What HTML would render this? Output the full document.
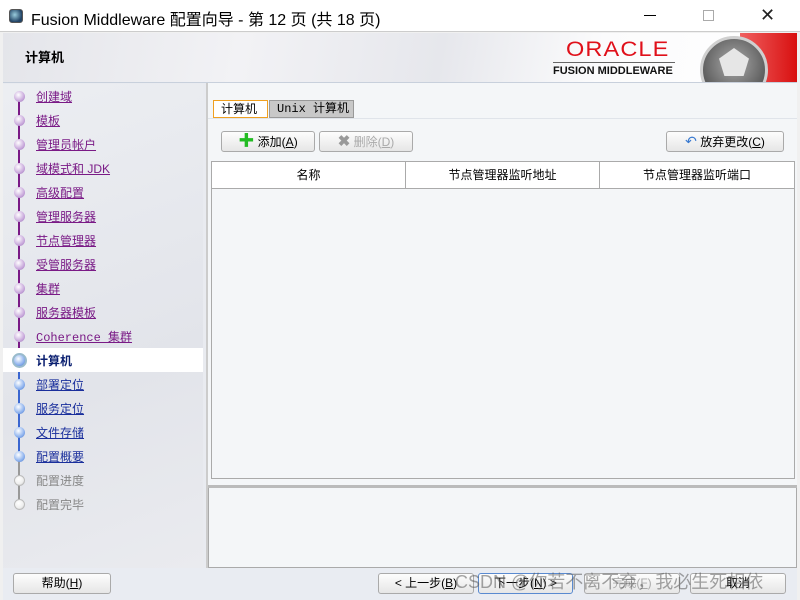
<!DOCTYPE html>
<html><head><meta charset="utf-8"><style>
*{box-sizing:border-box;margin:0;padding:0}
body{width:800px;height:600px;overflow:hidden;background:#f0f0f0;font-family:"Liberation Sans","Noto Sans CJK SC",sans-serif;position:relative;font-size:12px}
.abs{position:absolute}
.title{left:0;top:0;width:800px;height:32px;background:#fff;border-bottom:1px solid #ccc}
.win{left:3px;top:33px;width:794px;height:567px;background:#e9ebf0}
.hdr{left:3px;top:33px;width:794px;height:50px;background:linear-gradient(100deg,#e4e5ea 0%,#f2f2f5 30%,#e6e7ec 55%,#fbfbfc 75%,#fff 100%);border-bottom:1px solid #c8d0dc;overflow:hidden}
.nav{left:3px;top:84px;width:200px;height:484px;background:linear-gradient(160deg,#eceef2,#e2e4ea 60%,#eaebef)}
.item{position:absolute;left:33px;font-size:12px;text-decoration:underline;font-family:"Liberation Sans","Noto Sans CJK SC",sans-serif}
.dot{position:absolute;left:11px;width:11px;height:11px;border-radius:50%}
.p{color:#7a1a86}.pd{background:radial-gradient(circle at 40% 35%,#fff,#c9a9dc 60%,#9a72b8)}
.b{color:#1a2f9c}.bd{background:radial-gradient(circle at 40% 35%,#fff,#8db2ee 60%,#4a76c8)}
.g{color:#888;text-decoration:none}.gd{background:radial-gradient(circle at 40% 35%,#fff,#eee 60%,#bbb)}
.right{left:206px;top:83px;width:591px;height:485px;background:#f4f6f8;border-left:2px solid #ccc}
.btn{position:absolute;height:21px;border:1px solid #aaa;border-radius:3px;background:linear-gradient(#fdfdfd,#e6e6e6);font-size:12px;text-align:center;line-height:19px;color:#000}
</style></head><body>
<div class="abs title">
 <div class="abs" style="left:9px;top:9px;width:14px;height:14px;border-radius:3px;background:radial-gradient(circle at 40% 40%,#9cd,#246 70%);border:1px solid #555"></div>
 <div class="abs" style="left:31px;top:6px;font-size:16px;color:#000">Fusion Middleware 配置向导 - 第 12 页 (共 18 页)</div>
 <div class="abs" style="left:644px;top:15px;width:12px;height:1px;background:#000"></div>
 <div class="abs" style="left:703px;top:10px;width:11px;height:11px;border:1px solid #aaa"></div>
 <div class="abs" style="left:760px;top:5px;font-size:18px;color:#222">✕</div>
</div>
<div class="abs win"></div>
<div class="abs hdr">
 <div class="abs" style="left:22px;top:14px;font-size:13px;font-weight:bold">计算机</div>
 <div class="abs" style="left:563px;top:5px;font-size:21px;color:#e0101a;letter-spacing:1px;transform:scaleX(1.12);transform-origin:left">ORACLE</div>
 <div class="abs" style="left:550px;top:29px;width:122px;height:1px;background:#666"></div>
 <div class="abs" style="left:550px;top:32px;font-size:11px;font-weight:bold;color:#111">FUSION MIDDLEWARE</div>
 <div class="abs" style="left:737px;top:0;width:57px;height:49px;background:linear-gradient(90deg,#f06060,#d81010)"></div>
 <div class="abs" style="left:697px;top:3px;width:68px;height:68px;border-radius:50%;background:radial-gradient(circle at 50% 40%,#aaa,#555 75%);border:3px solid #d0d0d0"></div>
 <div class="abs" style="left:716px;top:15px;width:30px;height:28px;background:#e6e6e6;clip-path:polygon(50% 0,100% 38%,82% 100%,18% 100%,0 38%)"></div>
</div>
<div class="abs nav">
 <div class="abs" style="left:15px;top:12px;width:2px;height:264px;background:#7a1a86"></div>
 <div class="abs" style="left:15px;top:276px;width:2px;height:96px;background:#3a66d0"></div>
 <div class="abs" style="left:15px;top:372px;width:2px;height:48px;background:#999"></div>
 <div class="abs" style="left:0;top:264px;width:200px;height:24px;background:#fff"></div>
</div>
<div class="abs" style="left:3px;top:84px;width:200px;height:484px">
 <div class="dot pd" style="top:7px"></div><div class="item p" style="top:4px">创建域</div>
 <div class="dot pd" style="top:31px"></div><div class="item p" style="top:28px">模板</div>
 <div class="dot pd" style="top:55px"></div><div class="item p" style="top:52px">管理员帐户</div>
 <div class="dot pd" style="top:79px"></div><div class="item p" style="top:76px">域模式和 JDK</div>
 <div class="dot pd" style="top:103px"></div><div class="item p" style="top:100px">高级配置</div>
 <div class="dot pd" style="top:127px"></div><div class="item p" style="top:124px">管理服务器</div>
 <div class="dot pd" style="top:151px"></div><div class="item p" style="top:148px">节点管理器</div>
 <div class="dot pd" style="top:175px"></div><div class="item p" style="top:172px">受管服务器</div>
 <div class="dot pd" style="top:199px"></div><div class="item p" style="top:196px">集群</div>
 <div class="dot pd" style="top:223px"></div><div class="item p" style="top:220px">服务器模板</div>
 <div class="dot pd" style="top:247px"></div><div class="item p" style="top:244px;font-family:'Liberation Mono','Noto Sans CJK SC',monospace">Coherence 集群</div>
 <div class="dot bd" style="top:269px;left:9px;width:15px;height:15px;border:2px solid #9bc"></div><div class="item" style="top:268px;color:#0a1f70;font-weight:bold;text-decoration:none">计算机</div>
 <div class="dot bd" style="top:295px"></div><div class="item b" style="top:292px">部署定位</div>
 <div class="dot bd" style="top:319px"></div><div class="item b" style="top:316px">服务定位</div>
 <div class="dot bd" style="top:343px"></div><div class="item b" style="top:340px">文件存储</div>
 <div class="dot bd" style="top:367px"></div><div class="item b" style="top:364px">配置概要</div>
 <div class="dot gd" style="top:391px;border:1px solid #bbb"></div><div class="item g" style="top:388px">配置进度</div>
 <div class="dot gd" style="top:415px;border:1px solid #bbb"></div><div class="item g" style="top:412px">配置完毕</div>
</div>
<div class="abs right">
 <div class="abs" style="left:0;top:35px;width:589px;height:1px;background:#e0e4ea"></div>
 <div class="abs" style="left:5px;top:17px;width:55px;height:18px;border:1px solid #f0a020;background:#fff;font-size:12px;padding-left:7px;line-height:16px">计算机</div>
 <div class="abs" style="left:61px;top:17px;width:85px;height:18px;border:1px solid #999;background:#c8c8c8;font-size:12px;padding-left:7px;line-height:16px;font-family:'Liberation Mono','Noto Sans CJK SC',monospace">Unix 计算机</div>
 <div class="btn" style="left:13px;top:48px;width:94px"><span style="color:#2b2;font-weight:bold;font-size:16px">✚</span> 添加(<u>A</u>)</div>
 <div class="btn" style="left:111px;top:48px;width:94px;color:#aaa"><span style="color:#999;font-weight:bold;font-size:15px">✖</span> 删除(<u>D</u>)</div>
 <div class="btn" style="left:458px;top:48px;width:118px"><span style="color:#3a7ad0;font-size:14px">↶</span> 放弃更改(<u>C</u>)</div>
 <div class="abs" style="left:3px;top:78px;width:584px;height:318px;border:1px solid #aaa;background:#f4f6f8">
  <div class="abs" style="left:0;top:0;width:582px;height:27px;border-bottom:1px solid #aaa;background:#fff;font-size:12px">
   <div class="abs" style="left:0;width:194px;height:26px;border-right:1px solid #aaa;text-align:center;line-height:26px">名称</div>
   <div class="abs" style="left:194px;width:194px;height:26px;border-right:1px solid #aaa;text-align:center;line-height:26px">节点管理器监听地址</div>
   <div class="abs" style="left:388px;width:194px;height:26px;text-align:center;line-height:26px">节点管理器监听端口</div>
  </div>
 </div>
 <div class="abs" style="left:0;top:402px;width:589px;height:3px;background:#bbb"></div>
 <div class="abs" style="left:0;top:405px;width:589px;height:80px;border:1px solid #aaa;border-top:none;background:#f4f6f8"></div>
</div>
<div class="abs" style="left:3px;top:568px;width:794px;height:32px;background:#e9ecf2"></div>
<div class="btn" style="left:13px;top:573px;width:98px">帮助(<u>H</u>)</div>
<div class="btn" style="left:378px;top:573px;width:96px">&lt; 上一步(<u>B</u>)</div>
<div class="btn" style="left:478px;top:573px;width:95px;border-color:#5a8ad0">下一步(<u>N</u>) &gt;</div>
<div class="btn" style="left:584px;top:573px;width:96px;color:#aaa">完成(<u>F</u>)</div>
<div class="btn" style="left:690px;top:573px;width:96px">取消</div>
<div class="abs" style="left:455px;top:568px;font-size:18px;color:rgba(90,90,90,0.55);white-space:nowrap">CSDN @你若不离不弃，我必生死相依</div>
</body></html>
